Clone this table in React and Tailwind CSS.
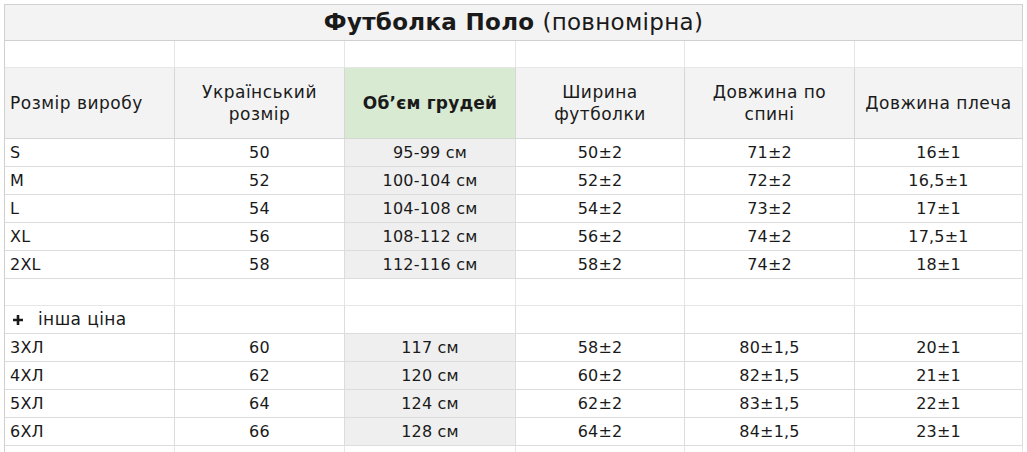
import React from "react";

const cols = "grid grid-cols-[170px_170px_171px_169px_170px_168px]";
const font = { fontFamily: '"DejaVu Sans", sans-serif' };

const rowsA = [
  ["S", "50", "95-99 см", "50±2", "71±2", "16±1"],
  ["M", "52", "100-104 см", "52±2", "72±2", "16,5±1"],
  ["L", "54", "104-108 см", "54±2", "73±2", "17±1"],
  ["XL", "56", "108-112 см", "56±2", "74±2", "17,5±1"],
  ["2XL", "58", "112-116 см", "58±2", "74±2", "18±1"],
];
const rowsB = [
  ["3ХЛ", "60", "117 см", "58±2", "80±1,5", "20±1"],
  ["4ХЛ", "62", "120 см", "60±2", "82±1,5", "21±1"],
  ["5ХЛ", "64", "124 см", "62±2", "83±1,5", "22±1"],
  ["6ХЛ", "66", "128 см", "64±2", "84±1,5", "23±1"],
];

function DataRow({ r }) {
  return (
    <div className={`${cols} h-[28px] text-[16px] tracking-[0.2px]`}>
      {r.map((v, i) => (
        <div
          key={i}
          className={`flex items-center border-r border-b border-[#dcdcdc] ${
            i === 0 ? "justify-start pl-[5px]" : "justify-center"
          } ${i === 2 ? "bg-[#efefef]" : "bg-white"}`}
        >
          {v}
        </div>
      ))}
    </div>
  );
}

function BlankRow({ h }) {
  return (
    <div className={`${cols} ${h}`}>
      {[0, 1, 2, 3, 4, 5].map((i) => (
        <div key={i} className="border-r border-b border-[#e6e6e6] bg-white" />
      ))}
    </div>
  );
}

export default function App() {
  return (
    <div className="w-[1027px] h-[452px] overflow-hidden bg-white pt-[4px] pl-[4px] text-[#1a1a1a]" style={font}>
      <div className="w-[1019px] border-l border-t border-[#d0d0d0]">
        <div className="h-[36px] flex items-center justify-center bg-[#f3f3f3] border-r border-b border-[#d0d0d0] text-[23px] tracking-[0.3px]">
          <span className="font-bold">Футболка Поло</span>
          <span className="ml-[8px]">(повномірна)</span>
        </div>
        <BlankRow h="h-[27px]" />
        <div className={`${cols} h-[71px] leading-[22px] text-[17px] tracking-[0.5px]`}>
          <div className="flex items-center pl-[5px] bg-[#f3f3f3] border-r border-b border-[#d6d6d6]">Розмір виробу</div>
          <div className="flex items-center justify-center text-center bg-[#f3f3f3] border-r border-b border-[#d6d6d6]">Український<br />розмір</div>
          <div className="flex items-center justify-center text-center font-bold bg-[#d9ead3] border-r border-b border-[#d6d6d6] tracking-[0.2px]">Об’єм грудей</div>
          <div className="flex items-center justify-center text-center bg-[#f3f3f3] border-r border-b border-[#d6d6d6]">Ширина<br />футболки</div>
          <div className="flex items-center justify-center text-center bg-[#f3f3f3] border-r border-b border-[#d6d6d6]">Довжина по<br />спині</div>
          <div className="flex items-center justify-center text-center bg-[#f3f3f3] border-r border-b border-[#d6d6d6]">Довжина плеча</div>
        </div>
        {rowsA.map((r, i) => (
          <DataRow key={i} r={r} />
        ))}
        <BlankRow h="h-[27px]" />
        <div className={`${cols} h-[28px] text-[17px] tracking-[0.4px]`}>
          <div className="flex items-center pl-[7px] border-r border-b border-[#dcdcdc] bg-white">
            <svg width="12" height="12" viewBox="0 0 12 12" className="mr-[14px]">
              <path d="M6 1v10M1 6h10" stroke="#1a1a1a" strokeWidth="2.6" />
            </svg>
            інша ціна
          </div>
          {[1, 2, 3, 4, 5].map((i) => (
            <div key={i} className="border-r border-b border-[#dcdcdc] bg-white" />
          ))}
        </div>
        {rowsB.map((r, i) => (
          <DataRow key={i} r={r} />
        ))}
        <BlankRow h="h-[28px]" />
      </div>
    </div>
  );
}
